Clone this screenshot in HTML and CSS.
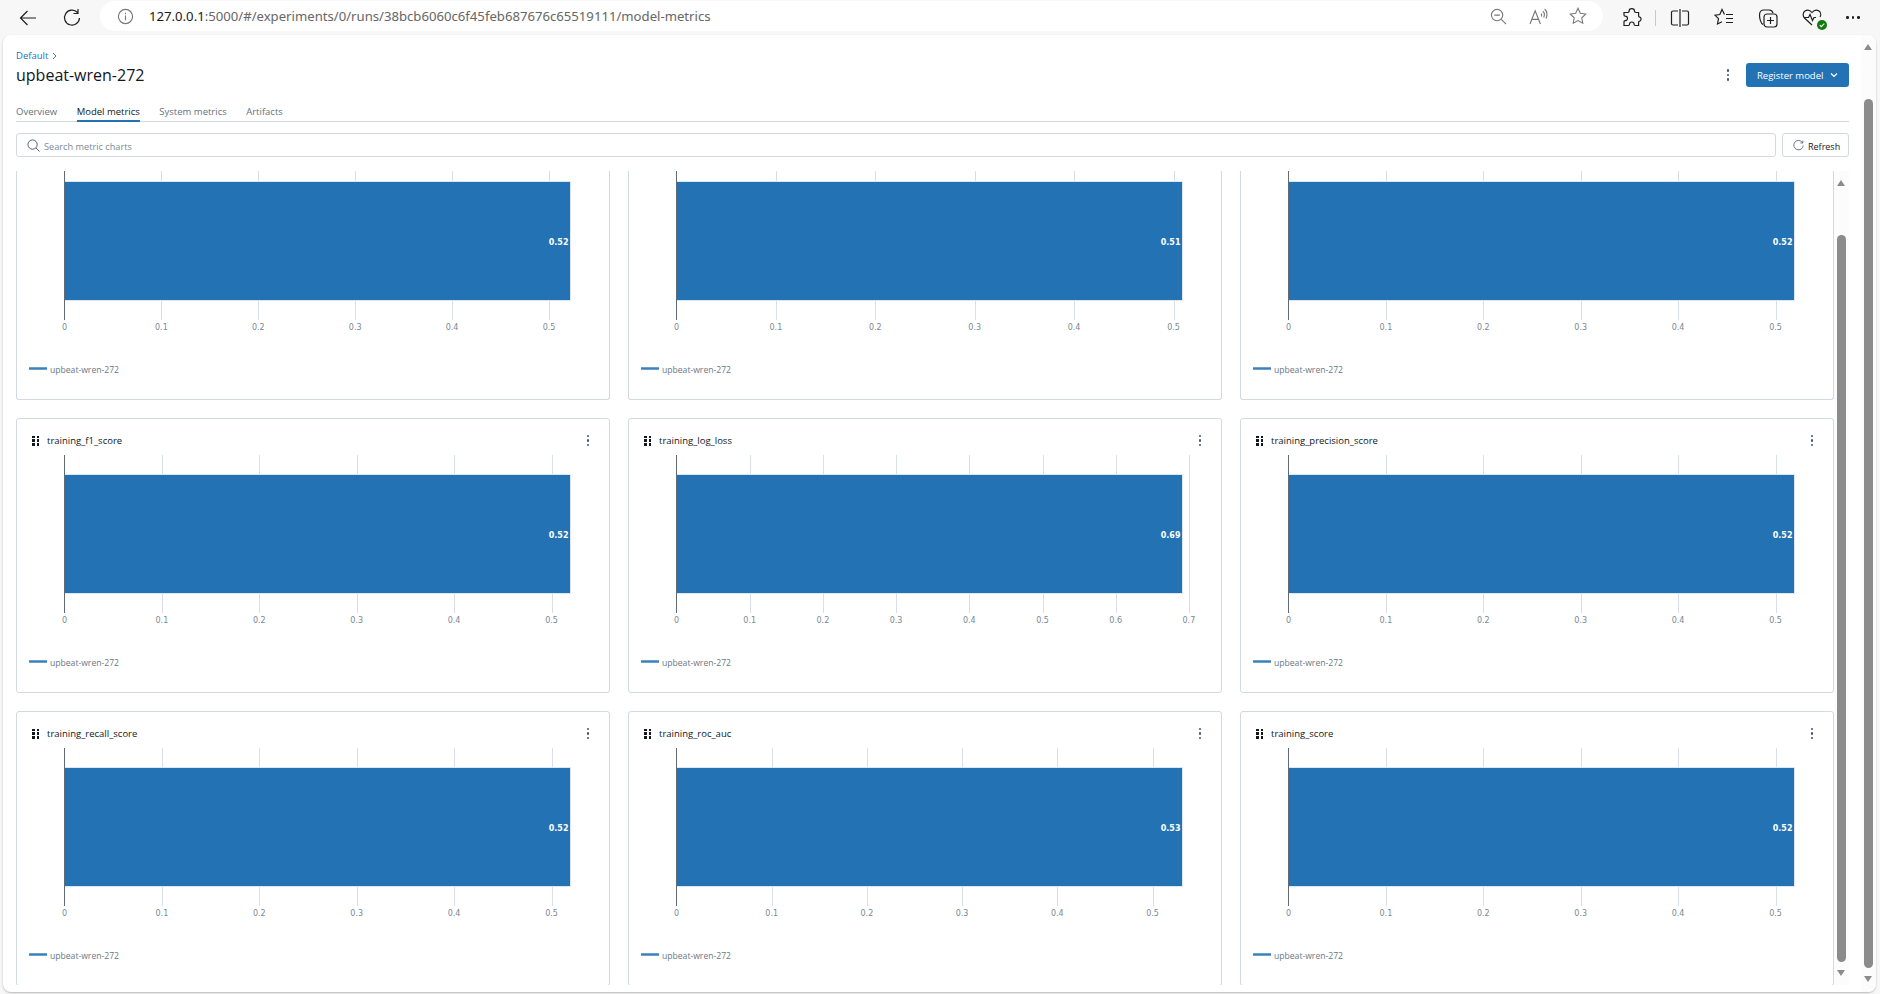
FILE: index.html
```html
<!DOCTYPE html>
<html lang="en">
<head>
    <meta charset="UTF-8">
    <title>upbeat-wren-272 - MLflow</title>
    <link rel="stylesheet" href="styles.css">
</head>
<body>
    <header class="toolbar">
        <svg class="tool-icon back" viewBox="0 0 20 20"><path d="M18 10H2.500M9.500 3 2.500 10l7 7"/></svg>
        <svg class="tool-icon reload" viewBox="0 0 20 20"><path d="M15.500 4.500A7.500 7.500 0 1 0 17.500 10M16 1v4.500h-4.500"/></svg>
        <div class="address">
            <svg class="addr-icon info" viewBox="0 0 18 18"><circle cx="9" cy="9" r="7.500"/><path d="M9 8v5M9 5v1.500"/></svg>
            <span class="url"><b>127.0.0.1</b>:5000/#/experiments/0/runs/38bcb6060c6f45feb687676c65519111/model-metrics</span>
            <svg class="addr-icon zoom-out" viewBox="0 0 18 18"><circle cx="7.500" cy="7.500" r="6"/><path d="M4.500 7.500h6M12 12l5 5"/></svg>
            <svg class="addr-icon read" viewBox="0 0 20 18"><path d="M1 17 6.500 3 12 17M3 12h7M12.500 6c1 .8 1 2.200.6 3M14.500 3.500c2 1.600 2 4.500 1 6.500M16.500 1c3 2.500 3 7 1.500 10"/></svg>
            <svg class="addr-icon star" viewBox="0 0 20 20"><path d="m10 1.500 2.600 5.500 6 .8-4.400 4.200 1.100 6L10 15.100 4.700 18l1.100-6L1.400 7.800l6-.8z"/></svg>
        </div>
        <svg class="tool-icon puzzle" viewBox="0 0 20 20"><path d="M7 3.500a2.800 2.800 0 0 1 5.600 0c0 .6 1 1 2 1h2v3.600c0 .8.800 1 1.200 1a2.200 2.200 0 0 1 0 4c-.6 0-1.200.4-1.200 1v3.400h-3.500c-.6 0-1-.6-1-1.200a2.300 2.300 0 0 0-4.600 0c0 .6-.4 1.200-1 1.200H2v-3.800c0-.6.600-1 1.200-1a2.300 2.300 0 0 0 0-4.600C2.600 8 2 7.600 2 7V4.500h3.500c.8 0 1.500-.4 1.500-1z"/></svg>
        <span class="tool-sep"></span>
        <svg class="tool-icon split" viewBox="0 0 20 20"><path d="M8 3H3a1.500 1.500 0 0 0-1.500 1.500v11A1.500 1.500 0 0 0 3 17h5M12 3h5a1.500 1.500 0 0 1 1.500 1.500v11A1.500 1.500 0 0 1 17 17h-5M10 1v18"/></svg>
        <svg class="tool-icon favs" viewBox="0 0 20 20"><path d="M10.500 6.500 8 1.500 5.800 6.500 1 7.200l3.500 3.500L3.500 16 8 13.800M12 6.500h7M12 10.500h7M12 14.500h7"/></svg>
        <svg class="tool-icon collect" viewBox="0 0 20 20"><path d="M5 16.500C3 15.500 1.500 11 1.500 7 1.500 4 3 2 6 2h5c2 0 3.500 1 4 3"/><rect x="6" y="6" width="13" height="13" rx="3"/><path d="M12.500 9v7M9 12.500h7"/></svg>
        <span class="heart">
            <svg class="tool-icon" viewBox="0 0 20 20"><path d="M10 17 2.500 10C.500 8 .800 4.500 3 3c2.200-1.500 5-1 7 1.500C12 2 14.800 1.500 17 3c1.800 1.300 2.200 4 1 6M2 9.500h4.500l1.500-3 2.500 6 1.500-3h2"/></svg>
            <svg class="heart-ok" viewBox="0 0 10 10"><circle cx="5" cy="5" r="5"/><path d="m2.800 5.200 1.500 1.500 3-3"/></svg>
        </span>
        <span class="more"><i></i><i></i><i></i></span>
    </header>

    <div class="page">
        <main class="main">
            <div class="crumb"><a href="#">Default</a><svg class="crumb-arrow" viewBox="0 0 8 8"><path d="m3 1 3 3-3 3"/></svg></div>
            <div class="title-row">
                <h1>upbeat-wren-272</h1>
                <span class="kebab big"><i></i><i></i><i></i></span>
                <button class="register" type="button">Register model
                    <svg class="caret" viewBox="0 0 8 8"><path d="m1 2.500 3 3 3-3"/></svg>
                </button>
            </div>
            <nav class="tabs">
                <a href="#">Overview</a>
                <a href="#" class="active">Model metrics</a>
                <a href="#">System metrics</a>
                <a href="#">Artifacts</a>
            </nav>
            <div class="search-row">
                <label class="search">
                    <svg class="search-icon" viewBox="0 0 14 14"><circle cx="6" cy="6" r="5"/><path d="m9.500 9.500 4 4"/></svg>
                    <span>Search metric charts</span>
                </label>
                <button class="refresh" type="button">
                    <svg class="refresh-icon" viewBox="0 0 14 14"><path d="M12 3.200A6 6 0 1 0 13 7M12.500 .800v3h-3"/></svg>
                    Refresh
                </button>
            </div>
            <div class="scroller">
                <div class="grid" id="grid"></div>
                <div class="bar-track inner">
                    <span class="arrow up"></span>
                    <span class="thumb"></span>
                    <span class="arrow down"></span>
                </div>
            </div>
        </main>
        <div class="bar-track outer">
            <span class="arrow up"></span>
            <span class="thumb"></span>
            <span class="arrow down"></span>
        </div>
    </div>
    <script src="charts.js"></script>
</body>
</html>
```

FILE: styles.css
```css
* { box-sizing: border-box; }
body { margin: 0; height: 994px; overflow: hidden; background: #f7f7f7; font-family: "Open Sans", sans-serif; color: #11171c; display: flex; flex-direction: column; }
a { text-decoration: none; color: inherit; }

/* browser toolbar */
.toolbar { height: 35px; flex: none; display: flex; align-items: center; padding-left: 18px; }
.toolbar svg { fill: none; stroke: #1f1f1f; stroke-width: 1.200; }
.tool-icon { width: 20px; height: 20px; flex: none; }
.reload { margin-left: 24px; }
.address { height: 30px; margin: 0 19px 3px 18px; width: 1503px; flex: none; background: #fff; border-radius: 15px; display: flex; align-items: center; padding-left: 17px; }
.toolbar .addr-icon { stroke: #777; flex: none; }
.info { width: 17px; height: 17px; }
.url { font-family: "Noto Sans", sans-serif; font-size: 13.150px; color: #666; margin-left: 15px; width: 1341px; flex: none; white-space: nowrap; }
.url b { font-weight: 400; color: #1b1b1b; }
.zoom-out { width: 17px; height: 17px; }
.read { width: 19px; height: 17px; margin-left: 22px; }
.star { width: 18px; height: 18px; margin-left: 21px; }
.tool-sep { width: 1px; height: 16px; background: #c8c8c8; margin: 0 13px; flex: none; }
.split { margin-left: 1px; }
.favs { margin-left: 24px; }
.collect { margin-left: 24px; }
.heart { position: relative; width: 20px; height: 20px; margin-left: 24px; flex: none; }
.toolbar .heart-ok { position: absolute; right: -5px; bottom: -2px; width: 10px; height: 10px; fill: #107c10; stroke: none; }
.toolbar .heart-ok path { fill: none; stroke: #fff; stroke-width: 1.100; }
.more { margin-left: 24px; display: flex; gap: 3px; }
.more i { width: 2.500px; height: 2.500px; border-radius: 50%; background: #1f1f1f; }

/* page */
.page { flex: 1; min-height: 0; margin: 0 4px 2px 3px; background: #fff; border-radius: 8px; box-shadow: 0 1px 2px rgba(0, 0, 0, 0.25); display: flex; overflow: hidden; }
.main { flex: 1; min-width: 0; padding: 13px 12px 7px 13px; display: flex; flex-direction: column; }
.crumb { height: 15px; display: flex; align-items: center; font-size: 9.500px; color: #2272b4; }
.crumb-arrow { width: 8px; height: 8px; margin-left: 2px; fill: none; stroke: #5f7281; stroke-width: 1; }
.title-row { height: 24px; display: flex; align-items: center; }
h1 { margin: 0; font-size: 16px; font-weight: 400; flex: 1; }
.kebab { display: flex; flex-direction: column; gap: 1.800px; }
.kebab i { width: 2.500px; height: 2.500px; background: #44566a; border-radius: 50%; }
.kebab.big { margin-right: 17px; }
.register { width: 103px; height: 24px; background: #2272b4; color: #fff; border: 0; border-radius: 3px; font: 9.500px "Open Sans", sans-serif; display: flex; align-items: center; padding: 0 0 0 11px; }
.caret { width: 8px; height: 8px; margin-left: 7px; fill: none; stroke: #fff; stroke-width: 1.200; }
.tabs { height: 24px; margin-top: 11px; display: flex; gap: 19.500px; border-bottom: 1px solid #d1d9e1; font-size: 9.500px; color: #5f7281; }
.tabs a { height: 24px; padding-top: 7px; }
.tabs a.active { color: #11171c; border-bottom: 2px solid #2272b4; }
.search-row { height: 24px; margin-top: 11px; display: flex; gap: 6px; }
.search { flex: 1; border: 1px solid #d1d9e1; border-radius: 3px; display: flex; align-items: center; padding-left: 10px; font-size: 9.200px; color: #7a8a97; }
.search span { padding-top: 3px; margin-left: -1px; }
.search-icon { width: 13px; height: 13px; margin-right: 5px; fill: none; stroke: #44566a; stroke-width: 1; }
.refresh { width: 67px; background: #fff; border: 1px solid #d1d9e1; border-radius: 3px; font: 9px "Open Sans", sans-serif; color: #11171c; display: flex; align-items: center; padding: 2px 0 0 10px; }
.refresh-icon { width: 11px; height: 11px; margin: -2px 4px 0 0; fill: none; stroke: #44566a; stroke-width: 1; }

/* chart cards */
.scroller { flex: 1; min-height: 0; margin-top: 14px; display: flex; overflow: hidden; }
.grid { width: 1818px; flex: none; display: grid; grid-template-columns: repeat(3, 594px); grid-template-rows: 229px 275px 275px; gap: 18px; align-content: start; }
.card { border: 1px solid #d1d9e1; border-radius: 3px; overflow: hidden; }
.card.cut { border-top: 0; border-radius: 0 0 3px 3px; }
.card-head { height: 36px; display: flex; align-items: center; padding: 7px 20px 0 15px; font-size: 9.500px; }
.card-title { flex: 1; margin-left: 7px; }
.drag { width: 8px; height: 10px; display: grid; grid-template-columns: 2.500px 2.500px; gap: 1.250px 2px; align-content: start; }
.drag i { width: 2.500px; height: 2.500px; background: #11171c; }
.chart { display: block; width: 592px; height: 236px; }
.card.cut .chart { margin-top: -9px; }
.grid-line { stroke: #d9dfe5; stroke-width: 1; }
.zero-line { stroke: #5f6b75; stroke-width: 1; }
.bar { fill: #2272b4; stroke: #dbe7f2; stroke-width: 1; }
.tick { font: 8px "DejaVu Sans", sans-serif; fill: #7b8793; text-anchor: middle; }
.value { font: bold 8px "DejaVu Sans", sans-serif; fill: #fff; text-anchor: end; }
.legend-line { stroke: #3a80bb; stroke-width: 2.500; }
.legend-text { font: 8.600px "Open Sans", sans-serif; fill: #6a7885; }

/* scrollbars */
.bar-track { flex: none; position: relative; background: #fcfcfc; }
.bar-track.inner { width: 15px; }
.bar-track.outer { width: 15px; }
.thumb { position: absolute; left: 3px; width: 9px; background: #8b8b8b; border-radius: 5px; }
.arrow { position: absolute; left: 3px; width: 0; height: 0; border-left: 4.500px solid transparent; border-right: 4.500px solid transparent; }
.arrow.up { top: 9px; border-bottom: 6px solid #8b8b8b; }
.arrow.down { border-top: 6px solid #8b8b8b; }
.inner .thumb { top: 64px; height: 727px; }
.inner .arrow.down { top: 799px; }
.outer .thumb { top: 64px; height: 869px; }
.outer .arrow.down { top: 941px; }
```

FILE: charts.js
```js
// spacing = px between two x axis ticks, it follows from the axis range of each chart
var rows = [
    { cut: true, cards: [
        { value: 0.52, spacing: 96.9, ticks: 6 },
        { value: 0.51, spacing: 99.4, ticks: 6 },
        { value: 0.52, spacing: 97.4, ticks: 6 }
    ] },
    { cards: [
        { name: "training_f1_score", value: 0.52, spacing: 97.4, ticks: 6 },
        { name: "training_log_loss", value: 0.69, spacing: 73.2, ticks: 8 },
        { name: "training_precision_score", value: 0.52, spacing: 97.4, ticks: 6 }
    ] },
    { cards: [
        { name: "training_recall_score", value: 0.52, spacing: 97.4, ticks: 6 },
        { name: "training_roc_auc", value: 0.53, spacing: 95.2, ticks: 6 },
        { name: "training_score", value: 0.52, spacing: 97.4, ticks: 6 }
    ] }
];

var AXIS_X = 47.5;
var BAR_RIGHT = 553.5;

function chartSvg(c) {
    var s = '<svg class="chart" viewBox="0 0 592 236">';
    for (var i = 1; i < c.ticks; i++) {
        var x = Math.round(AXIS_X + i * c.spacing) + 0.5;
        s += '<line class="grid-line" x1="' + x + '" x2="' + x + '" y1="0" y2="158"/>';
    }
    s += '<rect class="bar" x="' + AXIS_X + '" y="19.5" width="' + (BAR_RIGHT - AXIS_X) + '" height="119"/>';
    s += '<line class="zero-line" x1="' + AXIS_X + '" x2="' + AXIS_X + '" y1="0" y2="158"/>';
    s += '<text class="value" x="' + (BAR_RIGHT - 2) + '" y="83">' + c.value.toFixed(2) + '</text>';
    for (var t = 0; t < c.ticks; t++) {
        var label = t === 0 ? "0" : "0." + t;
        s += '<text class="tick" x="' + (AXIS_X + t * c.spacing) + '" y="168">' + label + '</text>';
    }
    s += '<line class="legend-line" x1="12" x2="30" y1="206.5" y2="206.5"/>';
    s += '<text class="legend-text" x="33" y="211">upbeat-wren-272</text>';
    return s + '</svg>';
}

var html = "";
rows.forEach(function (row) {
    row.cards.forEach(function (c) {
        html += '<section class="card' + (row.cut ? ' cut' : '') + '">';
        if (c.name) {
            html += '<div class="card-head"><span class="drag"><i></i><i></i><i></i><i></i><i></i><i></i></span>' +
                '<span class="card-title">' + c.name + '</span>' +
                '<span class="kebab"><i></i><i></i><i></i></span></div>';
        }
        html += chartSvg(c) + '</section>';
    });
});
document.getElementById("grid").innerHTML = html;
```
